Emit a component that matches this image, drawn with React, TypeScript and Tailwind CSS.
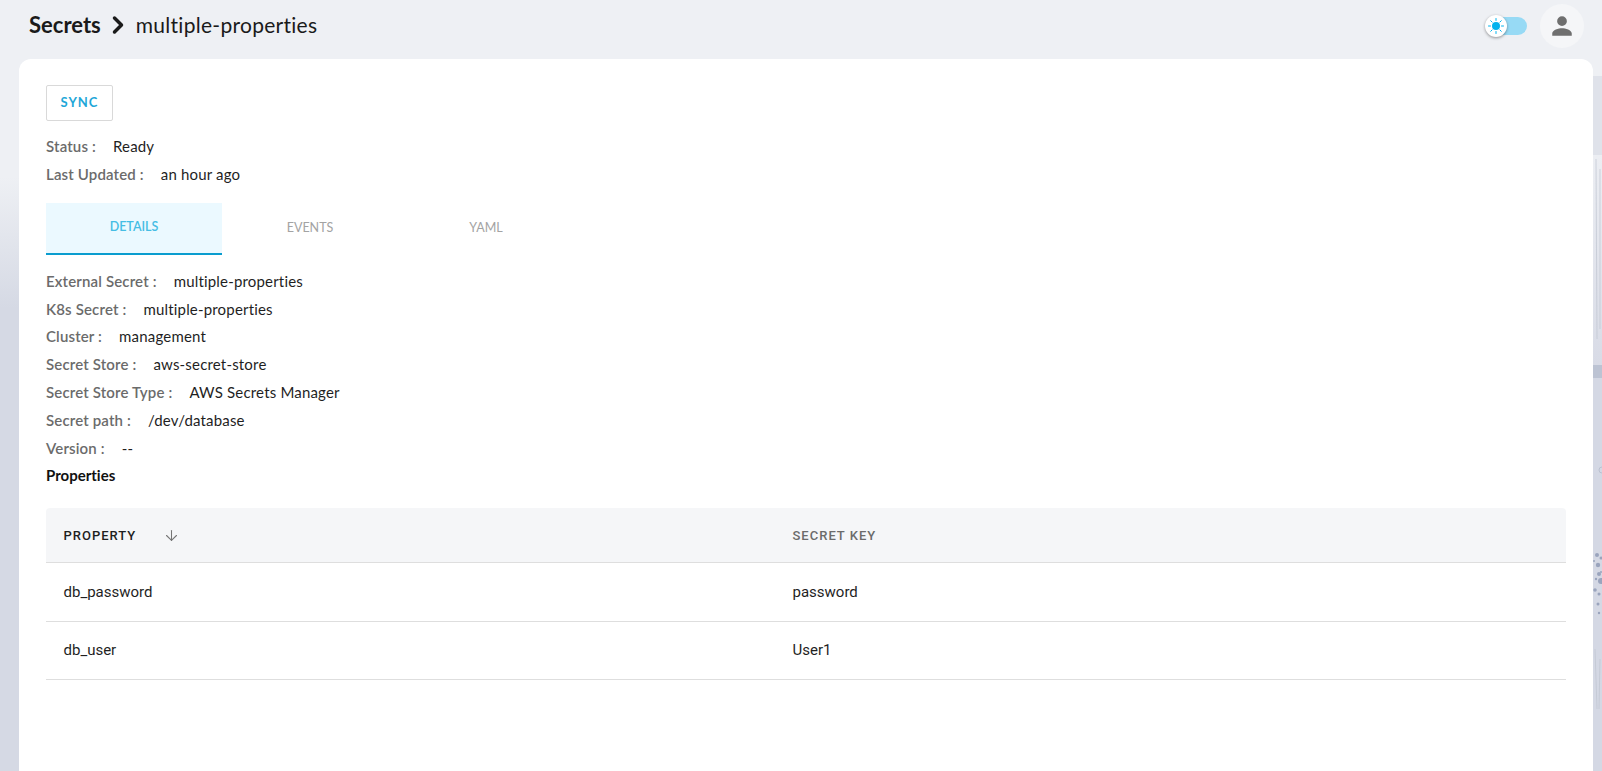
import { ArrowDown, ChevronRight } from "lucide-react";

const details = [
  { label: "External Secret :", value: "multiple-properties" },
  { label: "K8s Secret :", value: "multiple-properties" },
  { label: "Cluster :", value: "management" },
  { label: "Secret Store :", value: "aws-secret-store" },
  { label: "Secret Store Type :", value: "AWS Secrets Manager" },
  { label: "Secret path :", value: "/dev/database" },
  { label: "Version :", value: "--" },
];

const rows = [
  { property: "db_password", secretKey: "password" },
  { property: "db_user", secretKey: "User1" },
];

const tabs = ["DETAILS", "EVENTS", "YAML"];

const dots = [
  [4, 8, 2],
  [8, 11, 1.5],
  [5, 18, 2.2],
  [1, 14, 1],
  [6, 27, 2],
  [3, 32, 1.2],
  [8, 34, 3],
  [2, 43, 1.8],
  [6, 47, 1.5],
  [8, 25, 1],
  [5, 57, 1.5],
  [6, 66, 1.2],
];

const InfoRow = ({ label, value }: { label: string; value: string }) => (
  <div className="flex h-[27.8px] items-center text-[15px] [font-variant-ligatures:none]">
    <span className="font-semibold tracking-[0.15px] text-[#6b6b6b]">{label}</span>
    <span className="ml-[17px] tracking-[0.18px] text-[#1f1f1f]">{value}</span>
  </div>
);

const ThemeToggle = () => (
  <div className="relative h-[18px] w-[42px]">
    <div className="absolute right-0 top-0 h-[18px] w-[32px] rounded-full bg-[#97daf5]" />
    <div className="absolute left-0 top-[-2px] flex h-[22px] w-[22px] items-center justify-center rounded-full bg-white shadow-[0_1px_3px_rgba(0,0,0,0.4)]">
      <svg width="18" height="18" viewBox="0 0 18 18" stroke="#00b2ee" strokeWidth="1" strokeLinecap="round">
        <circle cx="9" cy="9" r="4" fill="#00b2ee" stroke="none" />
        <path d="M9 1.500v2M9 14.500v2M1.500 9h2M14.500 9h2M3.700 3.700l1.400 1.400M12.900 12.900l1.400 1.400M3.700 14.300l1.400-1.400M12.900 5.100l1.400-1.400" />
      </svg>
    </div>
  </div>
);

// Slice of the wallpaper that stays visible to the right of the card
const WallpaperEdge = () => (
  <div className="absolute bottom-0 right-0 top-[59px] flex w-[9px] flex-col">
    <div className="h-[17px] bg-[#eef0f4]" />
    <div className="h-[79px] bg-[#dfe2ea]" />
    <div className="h-[210px] bg-gradient-to-b from-[#eceef3] to-[#d8dbe6]" />
    <div className="h-[13px] bg-[#bcc3d3]" />
    <div className="flex-1 bg-[#d4d8e4]" />
    <svg className="absolute left-0 top-0" width="9" height="712" viewBox="0 0 9 712" fill="#9aa4bd">
      <path d="M3 100 L4 280 M7 110 L7 270 M2 590 L4 650 M7 600 L6 650" stroke="#bfc4d0" strokeWidth="0.7" fill="none" />
      <circle cx="9" cy="411" r="3" fill="none" stroke="#b4bbcb" strokeWidth="0.8" />
      <g transform="translate(0 488)">
        {dots.map(([cx, cy, r]) => (
          <circle key={`${cx}-${cy}`} cx={cx} cy={cy} r={r} />
        ))}
      </g>
    </svg>
  </div>
);

const App = () => {
  return (
    <div className="relative flex h-[771px] w-full flex-col overflow-hidden bg-[linear-gradient(to_bottom,#eef0f4_23%,#d5d9e4_40%)] font-['Lato',sans-serif]">
      <WallpaperEdge />
      <header className="flex h-[59px] flex-none items-center justify-between pb-[7px] pl-[29px] pr-[18px]">
        <div className="flex items-center pb-[3px] text-[#1a1a1a] [font-variant-ligatures:none]">
          <span className="text-[22px] font-bold">Secrets</span>
          <ChevronRight size={28} strokeWidth={3} className="ml-[3px] mr-[4px]" />
          <span className="text-[21px] tracking-[0.28px]">multiple-properties</span>
        </div>
        <div className="flex items-center gap-[13px]">
          <ThemeToggle />
          <div className="flex h-[44px] w-[44px] items-center justify-center rounded-full bg-[#f5f6f8]">
            <svg width="26" height="26" viewBox="0 0 24 24" fill="#6f6f6f">
              <path d="M12 12a4.500 4.500 0 1 0 0-9 4.500 4.500 0 0 0 0 9zm0 2c-3.200 0-9 1.600-9 4.800V21h18v-2.200c0-3.200-5.800-4.800-9-4.800z" />
            </svg>
          </div>
        </div>
      </header>

      <div className="relative flex min-h-0 flex-1 pl-[19px] pr-[9px]">
        <main className="flex-1 rounded-t-[12px] bg-white pl-[27px] pr-[27px] pt-[26px]">
          <button
            type="button"
            className="h-[36px] w-[67px] rounded-[2px] border border-[#d9d9d9] pb-[1px] text-[13px] font-bold tracking-[1px] text-[#1ea7d8]"
          >
            SYNC
          </button>

          <div className="mt-[11.5px]">
            <InfoRow label="Status :" value="Ready" />
            <InfoRow label="Last Updated :" value="an hour ago" />
          </div>

          <div className="mt-[14.5px] flex">
            {tabs.map((tab, i) => (
              <div
                key={tab}
                className={
                  i === 0
                    ? "flex h-[52px] w-[176px] items-center justify-center border-b-2 border-[#0a9dcf] bg-[#ebf9ff] text-[12.500px] font-semibold text-[#45bde4]"
                    : "flex h-[52px] w-[176px] items-center justify-center text-[12.500px] text-[#a3a3a3]"
                }
              >
                {tab}
              </div>
            ))}
          </div>

          <div className="mt-[12.5px]">
            {details.map((row) => (
              <InfoRow key={row.label} label={row.label} value={row.value} />
            ))}
            <div className="flex h-[27.8px] items-center text-[15px] font-bold text-[#111] [font-variant-ligatures:none]">
              Properties
            </div>
          </div>

          <div className="mt-[19px] font-['Roboto',sans-serif]">
            <div className="grid h-[55px] grid-cols-[729px_1fr] items-center rounded-t-[4px] border-b border-[#dedede] bg-[#f5f6f8] pl-[17.5px] pr-[18px] text-[13px] font-medium tracking-[1px]">
              <div className="flex items-center text-[#1f1f1f]">
                PROPERTY
                <ArrowDown size={17} strokeWidth={1.5} className="ml-[27px] text-[#757575]" />
              </div>
              <div className="text-[#6b6b6b]">SECRET KEY</div>
            </div>
            {rows.map((row) => (
              <div
                key={row.property}
                className="grid h-[58.5px] grid-cols-[729px_1fr] items-center border-b border-[#dedede] pl-[17.5px] pr-[18px] text-[15px] text-[#1f1f1f]"
              >
                <div>{row.property}</div>
                <div>{row.secretKey}</div>
              </div>
            ))}
          </div>
        </main>
      </div>
    </div>
  );
};

export default App;
